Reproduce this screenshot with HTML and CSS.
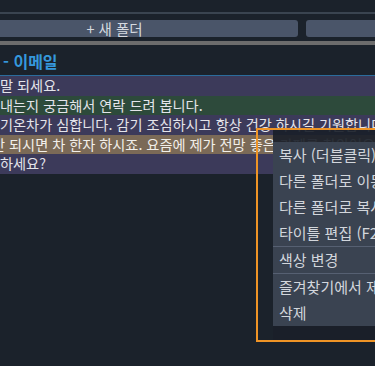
FILE: index.html
```html
<!DOCTYPE html>
<html lang="ko">
  <head>
    <meta charset="UTF-8" />
    <meta name="viewport" content="width=device-width, initial-scale=1" />
    <title>메모 목록</title>
    <link rel="stylesheet" href="styles.css">
  </head>
  <body>
    <div class="topbar"></div>
    <div class="toolbar">
      <button class="btn btn-new">+ 새 폴더</button>
      <button class="btn btn-other"></button>
    </div>
    <div class="splitter"></div>
    <div class="group-head">- 이메일</div>
    <div class="list">
      <div class="row row-purple">말 되세요.</div>
      <div class="row row-green">내는지 궁금해서 연락 드려 봅니다.</div>
      <div class="row row-purple">기온차가 심합니다. 감기 조심하시고 항상 건강 하시길 기원합니다.</div>
      <div class="row row-tan">간 되시면 차 한자 하시죠. 요즘에 제가 전망 좋은 카페를 찾았어요.</div>
      <div class="row row-purple">하세요?</div>
    </div>

    <div class="ctx">
      <div class="ctx-shade">
        <div class="menu">
          <div class="menu-item">복사 (더블클릭)</div>
          <div class="menu-item">다른 폴더로 이동</div>
          <div class="menu-item">다른 폴더로 복사</div>
          <div class="menu-item">타이틀 편집 (F2)</div>
          <div class="sep"></div>
          <div class="menu-item">색상 변경</div>
          <div class="sep"></div>
          <div class="menu-item">즐겨찾기에서 제거</div>
          <div class="menu-item">삭제</div>
        </div>
      </div>
    </div>
  </body>
</html>
```

FILE: styles.css
```css
body {
  margin: 0;
  height: 366px;
  overflow: hidden;
  position: relative;
  background: #1b222b;
  font-family: "Noto Sans CJK KR", "Noto Sans", sans-serif;
}
.topbar {
  height: 12px;
  border-bottom: 2px solid #3a4450;
}
.toolbar {
  display: flex;
  gap: 8px;
  padding: 6px 0 4px;
  margin-left: -69px;
  margin-right: -10px;
}
.btn {
  height: 17px;
  padding: 0;
  border: none;
  border-radius: 3px;
  background: #4a5569;
  color: #d5d9df;
  font-family: "Noto Sans CJK KR", "Noto Sans", sans-serif;
  font-size: 14.5px;
  line-height: 17px;
}
.btn-new {
  flex: 0 0 367px;
}
.btn-other {
  flex: 1;
}
.splitter {
  height: 4px;
  background: #6c6c6c;
}
/* group title */
.group-head {
  height: 27px;
  padding: 3px 0 0 3px;
  border-bottom: 1px solid #2b6c9c;
  color: #3598dc;
  font-weight: bold;
  font-size: 16px;
  line-height: 27px;
}
.row {
  height: 19.6px;
  line-height: 19.6px;
  font-size: 14.2px;
  color: #e4e4ea;
  white-space: nowrap;
  overflow: hidden;
}
.row-purple {
  background: #3c3a5a;
}
.row-green {
  background: #2d4a3b;
}
.row-tan {
  background: #7b6a57;
  color: #f2efea;
  text-indent: -8px;
}
/* context menu with focus frame */
.ctx {
  position: absolute;
  left: 256px;
  top: 128px;
  width: 140px;
  height: 210px;
  border: 2px solid #ef9426;
}
.ctx-shade {
  margin-left: 15px;
  height: 100%;
  padding-top: 12px;
  box-sizing: border-box;
  background: rgba(26, 32, 41, 0.92);
}
.menu {
  background: #3a4351;
}
.menu-item {
  height: 26px;
  line-height: 26px;
  padding-left: 6px;
  font-size: 15px;
  color: #d2d6dc;
  white-space: nowrap;
}
.sep {
  height: 1px;
  background: #566072;
}
```
